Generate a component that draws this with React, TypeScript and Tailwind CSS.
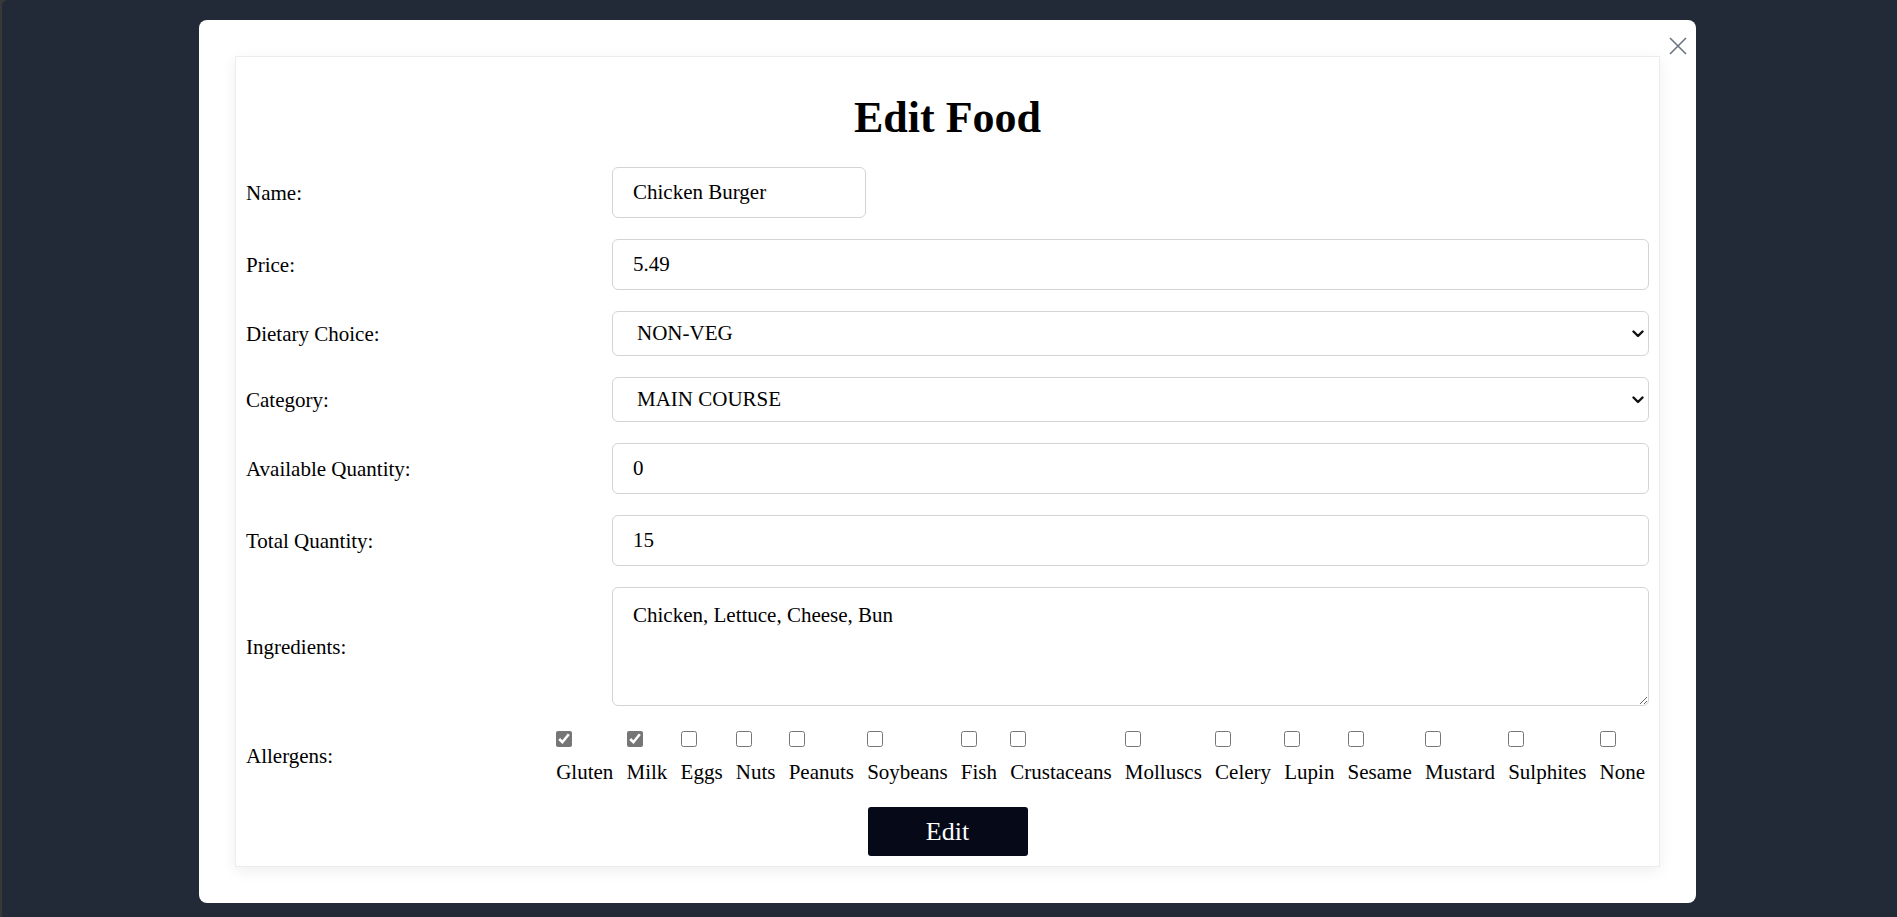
import * as React from "react";

const allergens = [
  { name: "Gluten", checked: true },
  { name: "Milk", checked: true },
  { name: "Eggs", checked: false },
  { name: "Nuts", checked: false },
  { name: "Peanuts", checked: false },
  { name: "Soybeans", checked: false },
  { name: "Fish", checked: false },
  { name: "Crustaceans", checked: false },
  { name: "Molluscs", checked: false },
  { name: "Celery", checked: false },
  { name: "Lupin", checked: false },
  { name: "Sesame", checked: false },
  { name: "Mustard", checked: false },
  { name: "Sulphites", checked: false },
  { name: "None", checked: false },
];

function Row({ label, children }: { label: string; children: React.ReactNode }) {
  return (
    <div className="mb-[21px] flex items-center">
      <label className="w-[366px] shrink-0 pt-[2px]">{label}</label>
      {children}
    </div>
  );
}

const inputCls =
  "h-[51px] rounded-md border border-[#d4d4d8] bg-white px-5 text-black outline-none";

function Select({
  value,
  options,
  onChange,
}: {
  value: string;
  options: string[];
  onChange: (v: string) => void;
}) {
  return (
    <div className="relative w-full">
      <select
        className="h-[45px] w-full appearance-none rounded-md border border-[#d4d4d8] bg-white pl-[24px] pr-8 text-black outline-none"
        value={value}
        onChange={(e) => onChange(e.target.value)}
      >
        {options.map((o) => (
          <option key={o}>{o}</option>
        ))}
      </select>
      {/* dropdown chevron */}
      <svg
        className="pointer-events-none absolute right-[5px] top-1/2 -translate-y-1/2"
        width="12"
        height="8"
        viewBox="0 0 12 8"
        fill="none"
        stroke="#111"
        strokeWidth="2.4"
        strokeLinecap="round"
        strokeLinejoin="round"
      >
        <path d="M1.5 1.5 L6 6 L10.5 1.5" />
      </svg>
    </div>
  );
}

export default function App() {
  const [name, setName] = React.useState("Chicken Burger");
  const [price, setPrice] = React.useState("5.49");
  const [diet, setDiet] = React.useState("NON-VEG");
  const [category, setCategory] = React.useState("MAIN COURSE");
  const [available, setAvailable] = React.useState("0");
  const [total, setTotal] = React.useState("15");
  const [ingredients, setIngredients] = React.useState("Chicken, Lettuce, Cheese, Bun");
  const [checked, setChecked] = React.useState<Record<string, boolean>>(
    Object.fromEntries(allergens.map((a) => [a.name, a.checked]))
  );

  return (
    <div className="min-h-screen w-full bg-[#383838] pl-[2px] font-['Liberation_Serif','Times_New_Roman',serif] text-[21px] text-black">
      <div className="min-h-[917px] rounded-tl-[6px] bg-[#222a38] pl-[197px] pt-[20px]">
        <div className="relative h-fit w-[1497px] rounded-lg bg-white p-9">
          <button className="absolute right-[9px] top-[17px] text-[#6b7280]" aria-label="Close">
            <svg width="18" height="18" viewBox="0 0 18 18" fill="none" stroke="currentColor" strokeWidth="1.6">
              <path d="M1 1 L17 17 M17 1 L1 17" />
            </svg>
          </button>

          <form
            className="border border-[#ececec] p-[10px] shadow-[0_4px_14px_rgba(0,0,0,0.07)]"
            onSubmit={(e) => e.preventDefault()}
          >
            <h1 className="mb-[25px] mt-[26px] text-center text-[44px] font-bold leading-[49px]">Edit Food</h1>

            <Row label="Name:">
              <input className={`${inputCls} w-[254px]`} value={name} onChange={(e) => setName(e.target.value)} />
            </Row>
            <Row label="Price:">
              <input className={`${inputCls} w-full`} value={price} onChange={(e) => setPrice(e.target.value)} />
            </Row>
            <Row label="Dietary Choice:">
              <Select value={diet} options={["VEG", "NON-VEG", "VEGAN"]} onChange={setDiet} />
            </Row>
            <Row label="Category:">
              <Select
                value={category}
                options={["STARTER", "MAIN COURSE", "DESSERT", "DRINKS"]}
                onChange={setCategory}
              />
            </Row>
            <Row label="Available Quantity:">
              <input className={`${inputCls} w-full`} value={available} onChange={(e) => setAvailable(e.target.value)} />
            </Row>
            <Row label="Total Quantity:">
              <input className={`${inputCls} w-full`} value={total} onChange={(e) => setTotal(e.target.value)} />
            </Row>
            <Row label="Ingredients:">
              <textarea
                className="h-[119px] w-full rounded-md border border-[#d4d4d8] bg-white px-5 py-3 text-black outline-none"
                value={ingredients}
                onChange={(e) => setIngredients(e.target.value)}
              />
            </Row>

            <div className="flex items-center justify-between">
              <label className="pt-[2px]">Allergens:</label>
              <div className="flex gap-[13.2px] pr-[4px]">
                {allergens.map((a) => (
                  <label key={a.name} className="flex flex-col items-start gap-[13px] pt-[4px]">
                    <input
                      type="checkbox"
                      className="m-0 h-4 w-4 accent-[#767676]"
                      checked={checked[a.name]}
                      onChange={(e) => setChecked({ ...checked, [a.name]: e.target.checked })}
                    />
                    <span className="leading-[24px]">{a.name}</span>
                  </label>
                ))}
              </div>
            </div>

            <div className="mt-[23px] flex justify-center">
              <button type="submit" className="h-[49px] w-[160px] rounded-[3px] bg-[#060a18] text-[26px] text-white">
                Edit
              </button>
            </div>
          </form>
        </div>
      </div>
    </div>
  );
}
